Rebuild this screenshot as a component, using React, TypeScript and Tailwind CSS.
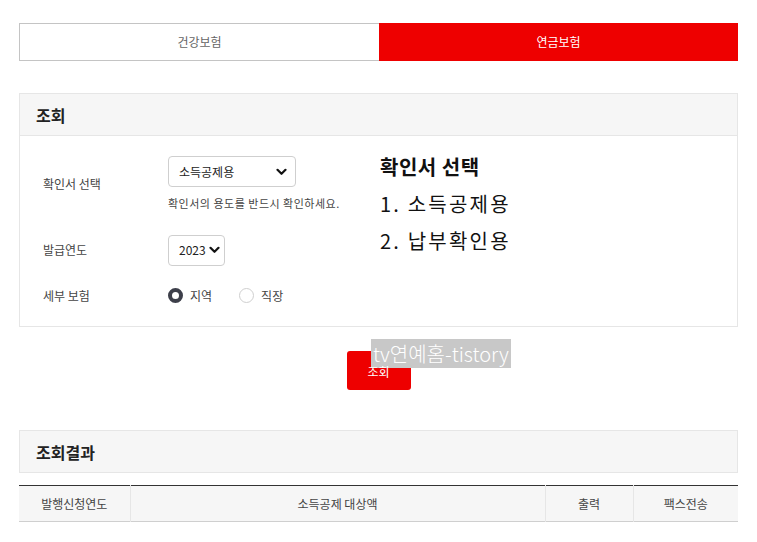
import { useState } from 'react';

const FONT = { fontFamily: '"Noto Sans CJK KR", "Noto Sans", sans-serif' };

function Chevron() {
  return (
    <svg width="11" height="8" viewBox="0 0 11 8" className="pointer-events-none absolute top-1/2 -translate-y-1/2 right-[4px]">
      <path d="M1.5 1.8 L5.5 5.8 L9.5 1.8" fill="none" stroke="#111" strokeWidth="2.2" strokeLinecap="round" strokeLinejoin="round" />
    </svg>
  );
}

function Radio({ checked, label, onClick }: { checked: boolean; label: string; onClick: () => void }) {
  return (
    <button type="button" onClick={onClick} className="flex items-center gap-[7px] text-[12px] text-[#444]">
      <span
        className={
          checked
            ? 'h-[15px] w-[15px] rounded-full border-[4px] border-[#3d3f4a] bg-white'
            : 'h-[15px] w-[15px] rounded-full border border-[#cfcfcf] bg-white'
        }
      />
      <span>{label}</span>
    </button>
  );
}

export default function App() {
  const [tab, setTab] = useState<'health' | 'pension'>('pension');
  const [종류, set종류] = useState('소득공제용');
  const [연도, set연도] = useState('2023');
  const [보험, set보험] = useState<'지역' | '직장'>('지역');

  return (
    <div className="min-h-screen bg-white px-[19px] pt-[23px]" style={FONT}>
      <div className="w-[719px]">
        {/* 탭 */}
        <div className="flex h-[38px]">
          <button
            type="button"
            onClick={() => setTab('health')}
            className={
              tab === 'health'
                ? 'flex-1 bg-[#ee0000] text-[12px] text-white'
                : 'flex-1 border border-r-0 border-[#c4c4c4] bg-white text-[12px] text-[#666]'
            }
          >
            건강보험
          </button>
          <button
            type="button"
            onClick={() => setTab('pension')}
            className={
              tab === 'pension'
                ? 'flex-1 bg-[#ee0000] text-[12px] text-white'
                : 'flex-1 border border-l-0 border-[#c4c4c4] bg-white text-[12px] text-[#666]'
            }
          >
            연금보험
          </button>
        </div>

        {/* 조회 */}
        <div className="mt-[32px] border border-[#e6e6e6]">
          <div className="flex h-[42px] items-center border-b border-[#e6e6e6] bg-[#f6f6f6] px-[16px]">
            <h2 className="text-[16px] font-bold text-[#222]">조회</h2>
          </div>

          <div className="flex h-[190px]">
            <div className="w-[360px] pl-[23px] pt-[20px]">
              <div className="flex">
                <div className="w-[125px] pt-[19px] text-[12px] text-[#444]">확인서 선택</div>
                <div>
                  <div className="relative w-[128px]">
                    <select
                      value={종류}
                      onChange={(e) => set종류(e.target.value)}
                      className="h-[31px] w-full appearance-none rounded-[4px] border border-[#cfcfcf] bg-white pl-[10px] text-[12px] text-[#222] outline-none"
                      style={FONT}
                    >
                      <option>소득공제용</option>
                      <option>납부확인용</option>
                    </select>
                    <span className="absolute right-[5px] top-0 h-full w-[12px]">
                      <Chevron />
                    </span>
                  </div>
                  <p className="mt-[8px] text-[11px] tracking-[0.5px] text-[#444]">확인서의 용도를 반드시 확인하세요.</p>
                </div>
              </div>

              <div className="mt-[23px] flex items-center">
                <div className="w-[125px] text-[12px] text-[#444]">발급연도</div>
                <div className="relative w-[57px]">
                  <select
                    value={연도}
                    onChange={(e) => set연도(e.target.value)}
                    className="h-[31px] w-full appearance-none rounded-[4px] border border-[#cfcfcf] bg-white pl-[10px] text-[12px] text-[#222] outline-none"
                    style={FONT}
                  >
                    <option>2023</option>
                    <option>2022</option>
                    <option>2021</option>
                  </select>
                  <span className="absolute right-[1px] top-0 h-full w-[12px]">
                    <Chevron />
                  </span>
                </div>
              </div>

              <div className="mt-[21px] flex items-center">
                <div className="w-[125px] text-[12px] text-[#444]">세부 보험</div>
                <div className="flex gap-[27px]">
                  <Radio checked={보험 === '지역'} label="지역" onClick={() => set보험('지역')} />
                  <Radio checked={보험 === '직장'} label="직장" onClick={() => set보험('직장')} />
                </div>
              </div>
            </div>

            <div className="pt-[12px] text-[20px] leading-[37px] text-[#111]">
              <p className="font-bold tracking-[0.5px]">확인서 선택</p>
              <p className="tracking-[2.2px]">1. 소득공제용</p>
              <p className="tracking-[2.2px]">2. 납부확인용</p>
            </div>
          </div>
        </div>

        {/* 조회 버튼 */}
        <div className="relative flex justify-center pt-[24px]">
          <button
            type="button"
            className="h-[39px] w-[64px] rounded-[3px] bg-[#ee0000] pt-[2px] text-[12px] text-white"
          >
            <span className="relative z-20">조회</span>
          </button>
          <span className="absolute left-[352px] top-[12px] z-10 bg-[#c8c8c8] px-[2px] text-[20px] font-light leading-[29px] text-white">
            tv연예홈-tistory
          </span>
        </div>

        {/* 조회결과 */}
        <div className="mt-[40px] flex h-[43px] items-center border border-[#e6e6e6] bg-[#f6f6f6] px-[16px]">
          <h2 className="text-[16px] font-bold text-[#222]">조회결과</h2>
        </div>

        <table className="mt-[12px] w-full border-collapse border-t border-t-[#333] text-[12px] text-[#444]">
          <thead>
            <tr className="h-[36px] border-b border-[#cfcfcf] bg-[#f6f6f6]">
              <th className="w-[111px] border-r border-[#e6e6e6] font-normal">발행신청연도</th>
              <th className="border-r border-[#e6e6e6] font-normal">소득공제 대상액</th>
              <th className="w-[88px] border-r border-[#e6e6e6] font-normal">출력</th>
              <th className="w-[105px] font-normal">팩스전송</th>
            </tr>
          </thead>
        </table>
      </div>
    </div>
  );
}
